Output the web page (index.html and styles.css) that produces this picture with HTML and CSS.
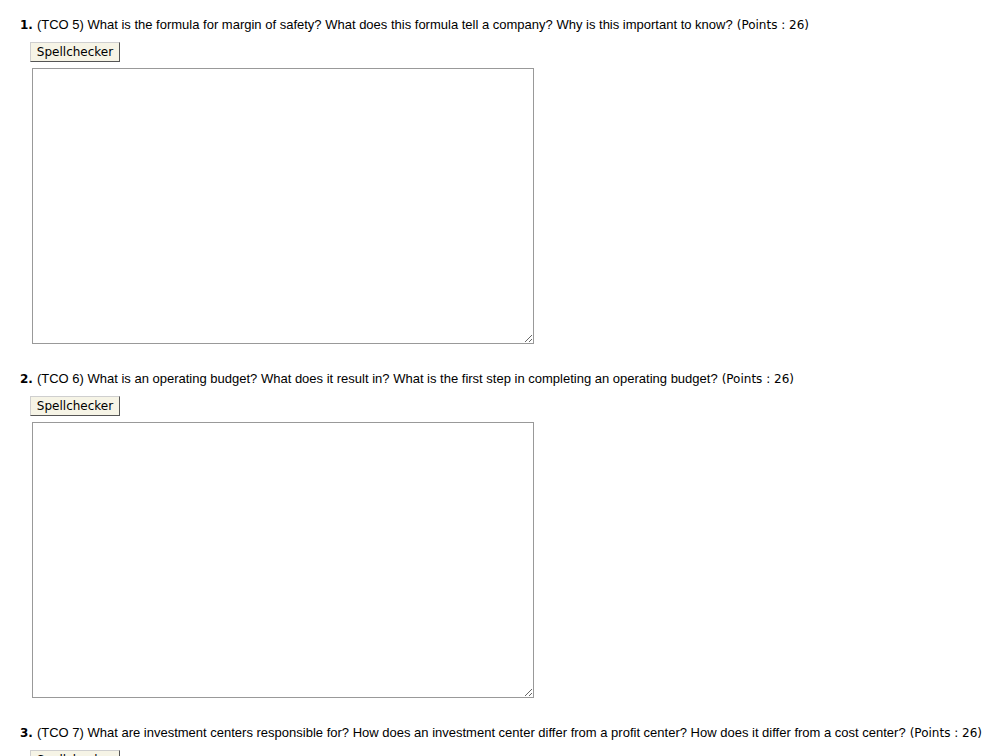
FILE: index.html
```html
<!DOCTYPE html>
<html>
<head>
<meta charset="utf-8">
<link rel="stylesheet" href="styles.css">
</head>
<body>
<div class="quiz">
  <div class="question">
    <div class="prompt"><span class="num">1.</span> <span class="text">(TCO 5) What is the formula for margin of safety? What does this formula tell a company? Why is this important to know?</span> <span class="points">(Points : 26)</span></div>
    <div class="answer">
      <button class="spell" type="button">Spellchecker</button>
      <textarea class="box"></textarea>
    </div>
  </div>
  <div class="question">
    <div class="prompt"><span class="num">2.</span> <span class="text">(TCO 6) What is an operating budget? What does it result in? What is the first step in completing an operating budget?</span> <span class="points">(Points : 26)</span></div>
    <div class="answer">
      <button class="spell" type="button">Spellchecker</button>
      <textarea class="box"></textarea>
    </div>
  </div>
  <div class="question">
    <div class="prompt"><span class="num">3.</span> <span class="text">(TCO 7) What are investment centers responsible for? How does an investment center differ from a profit center? How does it differ from a cost center?</span> <span class="points">(Points : 26)</span></div>
    <div class="answer">
      <button class="spell" type="button">Spellchecker</button>
      <textarea class="box"></textarea>
    </div>
  </div>
</div>
</body>
</html>
```

FILE: styles.css
```css
html, body {
  margin: 0;
  padding: 0;
  background: #fff;
  overflow: hidden;
}
body {
  color: #000;
}
.quiz {
  padding: 16px 0 0 20px;
  display: flex;
  flex-direction: column;
  gap: 26px;
}
.question {
  display: flex;
  flex-direction: column;
}
.prompt {
  white-space: nowrap;
  line-height: 15px;
  height: 15px;
}
.num {
  font-family: "DejaVu Sans", Verdana, sans-serif;
  font-weight: bold;
  font-size: 12px;
}
.text {
  font-family: "Liberation Sans", Arial, sans-serif;
  font-size: 13px;
}
.points {
  font-family: "DejaVu Sans", Verdana, sans-serif;
  font-size: 12px;
}
.answer {
  padding: 11px 0 0 10px;
  display: flex;
  flex-direction: column;
  align-items: flex-start;
  gap: 6px;
}
.spell {
  font-family: "DejaVu Sans", Verdana, sans-serif;
  font-size: 12px;
  color: #000;
  background: #f6f4e6;
  border: 1px solid;
  border-color: #cfcfcf #555 #555 #cfcfcf;
  padding: 1px 5px;
  height: 20px;
  width: 90px;
  margin: 0;
}
.box {
  margin: 0 0 0 2px;
  width: 502px;
  height: 276px;
  box-sizing: border-box;
  border: 1px solid #999;
  background: #fff;
  resize: both;
  padding: 2px;
}
```
